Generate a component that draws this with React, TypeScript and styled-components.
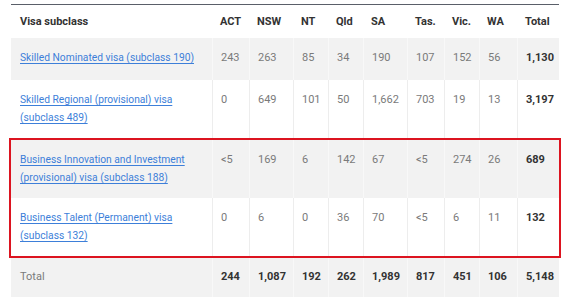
import styled, { createGlobalStyle } from "styled-components"

const GlobalStyle = createGlobalStyle`
  body {
    margin: 0;
    background: #ffffff;
    font-family: Roboto, "Liberation Sans", sans-serif;
  }
`

const columns = "201px 37px 44px 35px 35px 44px 37px 35px 38px 42px"

const states = ["ACT", "NSW", "NT", "Qld", "SA", "Tas.", "Vic.", "WA"]

type Visa = { name: string; values: string[]; total: string }

const visas: Visa[] = [
  { name: "Skilled Nominated visa (subclass 190)", values: ["243", "263", "85", "34", "190", "107", "152", "56"], total: "1,130" },
  { name: "Skilled Regional (provisional) visa (subclass 489)", values: ["0", "649", "101", "50", "1,662", "703", "19", "13"], total: "3,197" },
  { name: "Business Innovation and Investment (provisional) visa (subclass 188)", values: ["<5", "169", "6", "142", "67", "<5", "274", "26"], total: "689" },
  { name: "Business Talent (Permanent) visa (subclass 132)", values: ["0", "6", "0", "36", "70", "<5", "6", "11"], total: "132" },
]

const totals = ["244", "1,087", "192", "262", "1,989", "817", "451", "106", "5,148"]

const Page = styled.div`
  padding: 4px 7px 0 11px;
  width: 548px;
`

const Table = styled.div`
  border-top: 1px solid #5a5f69;
  display: flex;
  flex-direction: column;
`

const Row = styled.div<{ $shade?: boolean }>`
  display: grid;
  grid-template-columns: ${columns};
  min-height: 42px;
  background: ${(p) => (p.$shade ? "#f2f2f2" : "#ffffff")};
  --divider: ${(p) => (p.$shade ? "#f8f8f8" : "#ededed")};
`

const HeadRow = styled(Row)`
  min-height: 0;
  height: 33px;
  align-items: center;
`

const Cell = styled.div<{ $bold?: boolean; $first?: boolean }>`
  padding: 11px 0 11px 8px;
  font-size: 11px;
  line-height: 18px;
  color: ${(p) => (p.$bold ? "#333333" : "#7a7a7a")};
  font-weight: ${(p) => (p.$bold ? 700 : 400)};
  border-left: ${(p) => (p.$first ? "none" : "1px solid var(--divider)")};
  padding-left: ${(p) => (p.$first ? "9px" : "8px")};
`

const HeadCell = styled.div<{ $first?: boolean }>`
  padding-left: ${(p) => (p.$first ? "9px" : "8px")};
  font-size: 11px;
  font-weight: 700;
  color: #333333;
`

const VisaLink = styled.a`
  font-size: 10.25px;
  color: #3d7fd9;
  text-decoration: underline;
  text-underline-offset: 2px;
  text-decoration-thickness: 1px;
`

const Highlight = styled.div`
  border: 2px solid #dc1420;
  margin: 0 -2px;
  display: flex;
  flex-direction: column;
`

const TotalRow = styled(Row)`
  min-height: 39px;
  & > div {
    padding-top: 10px;
    padding-bottom: 11px;
  }
`

const VisaRow = ({ visa, shade }: { visa: Visa; shade: boolean }) => (
  <Row $shade={shade}>
    <Cell $first>
      <VisaLink href="#">{visa.name}</VisaLink>
    </Cell>
    {visa.values.map((v, i) => (
      <Cell key={i}>{v}</Cell>
    ))}
    <Cell $bold>{visa.total}</Cell>
  </Row>
)

const App = () => (
  <Page>
    <GlobalStyle />
    <Table>
      <HeadRow>
        <HeadCell $first>Visa subclass</HeadCell>
        {states.map((s) => (
          <HeadCell key={s}>{s}</HeadCell>
        ))}
        <HeadCell>Total</HeadCell>
      </HeadRow>
      <VisaRow visa={visas[0]} shade />
      <VisaRow visa={visas[1]} shade={false} />
      <Highlight>
        <VisaRow visa={visas[2]} shade />
        <VisaRow visa={visas[3]} shade={false} />
      </Highlight>
      <TotalRow $shade>
        <Cell $first>Total</Cell>
        {totals.map((t, i) => (
          <Cell key={i} $bold>
            {t}
          </Cell>
        ))}
      </TotalRow>
    </Table>
  </Page>
)

export default App
